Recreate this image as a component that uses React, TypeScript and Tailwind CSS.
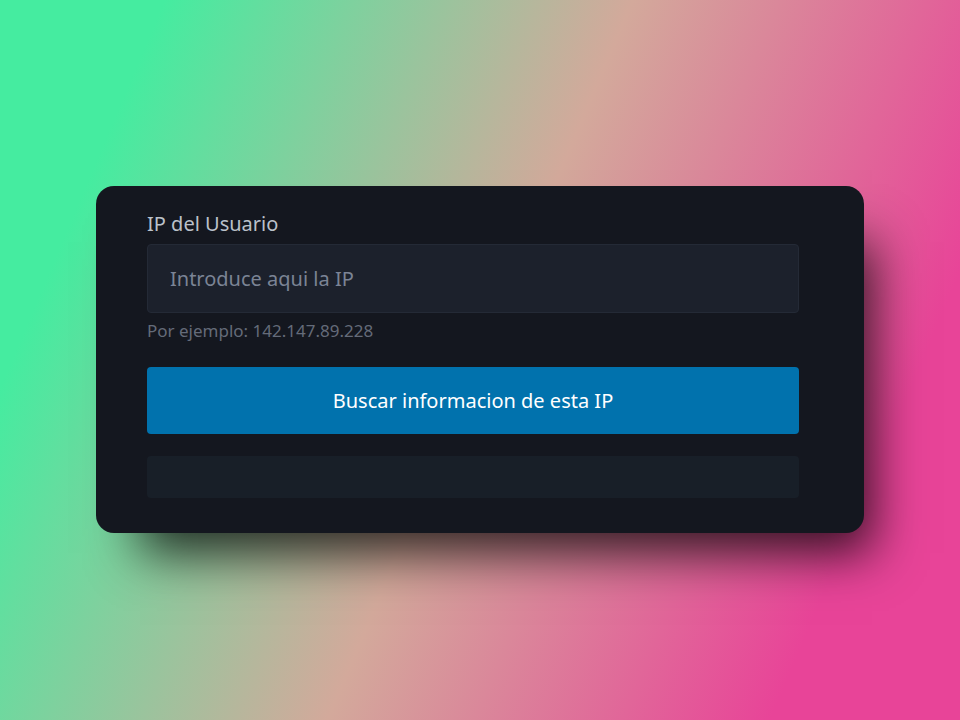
import React from "react";

export default function App() {
  return (
    <main className="flex min-h-screen items-center justify-center bg-[linear-gradient(113deg,#45eca0_13%,#d3a99b_50%,#e84498_85%)] px-24 pb-px font-['Noto_Sans',sans-serif]">
      <section className="w-full rounded-[18px] bg-[#14171f] pt-6 pr-[65px] pb-[35px] pl-[51px] shadow-[26px_38px_48px_-18px_rgba(0,0,0,0.78)]">
        <form onSubmit={(event) => event.preventDefault()}>
          <label htmlFor="ip" className="block text-xl leading-7 text-[#bbc1ca]">
            IP del Usuario
          </label>
          <input
            id="ip"
            type="text"
            aria-describedby="ip-help"
            placeholder="Introduce aqui la IP"
            className="mt-1.5 block h-[69px] w-full rounded border border-[#242a36] bg-[#1c212c] px-[22px] text-xl text-[#bbc1ca] placeholder:text-[#7b8495] placeholder:opacity-100"
          />
          <small id="ip-help" className="mt-1.5 block text-[17px] leading-6 text-[#646b79]">
            Por ejemplo: 142.147.89.228
          </small>
          <button type="submit" className="mt-6 block h-[67px] w-full rounded bg-[#0172ad] text-xl text-white">
            Buscar informacion de esta IP
          </button>
        </form>
        <div className="mt-[22px] h-[42px] rounded-sm bg-[#181f28]" />
      </section>
    </main>
  );
}
